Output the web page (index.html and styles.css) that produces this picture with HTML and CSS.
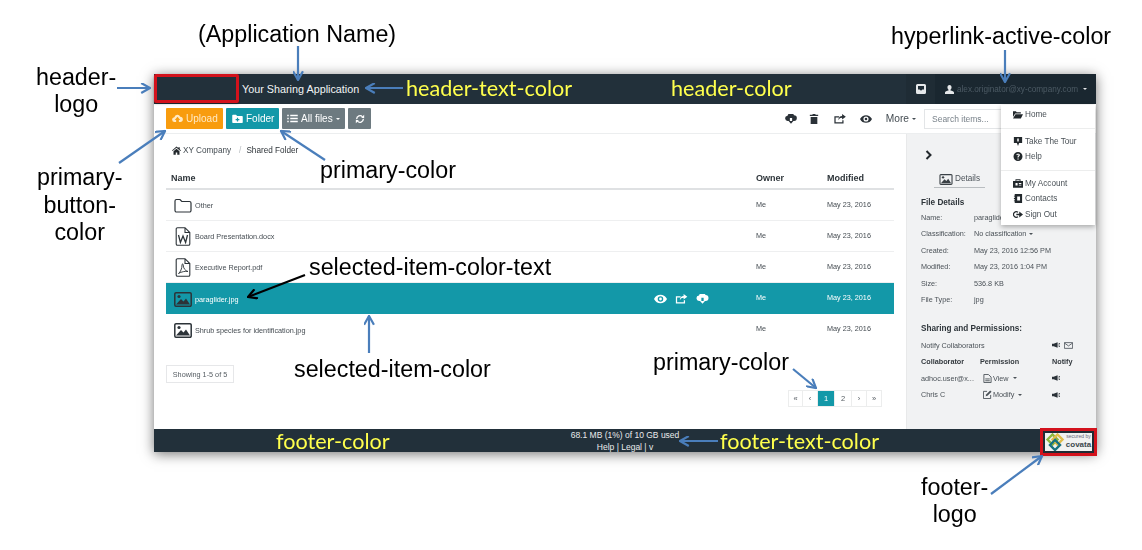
FILE: index.html
```html
<!DOCTYPE html>
<html lang="en">
<head>
<meta charset="utf-8">
<title>Your Sharing Application</title>
<link rel="stylesheet" href="styles.css">
</head>
<body>
<svg class="defs" width="0" height="0" aria-hidden="true">
  <defs>
    <symbol id="i-cloud-up" viewBox="0 0 16 12"><path d="M4 11a3.500 3.500 0 0 1-.6-7A4.600 4.600 0 0 1 12 3.400 3.800 3.800 0 0 1 12 11H10V8h2L8 3.600 4 8h2v3z"/></symbol>
    <symbol id="i-cloud-down" viewBox="0 0 16 13"><path d="M4 9a3.500 3.500 0 0 1-.6-7A4.600 4.600 0 0 1 12 1.400 3.800 3.800 0 0 1 12 9H9.500V5h-3v4zM4.800 9h6.400L8 12.800z"/></symbol>
    <symbol id="i-folder-plus" viewBox="0 0 14 12"><path fill-rule="evenodd" d="M0 2a1 1 0 0 1 1-1h4l1.500 1.500H13a1 1 0 0 1 1 1V11a1 1 0 0 1-1 1H1a1 1 0 0 1-1-1zM6.200 5v1.700H4.500v1.600h1.700V10h1.600V8.300h1.700V6.700H7.800V5z"/></symbol>
    <symbol id="i-list" viewBox="0 0 14 12"><path d="M0 1h2v2H0zM4 1h10v2H4zM0 5h2v2H0zM4 5h10v2H4zM0 9h2v2H0zM4 9h10v2H4z"/></symbol>
    <symbol id="i-refresh" viewBox="0 0 12 12"><path fill="none" stroke="currentColor" stroke-width="1.600" d="M2 6a4 4 0 0 1 7-2.600M10 6a4 4 0 0 1-7 2.600"/><path d="M7.500 4.500L11 1v4zM4.500 7.500L1 11V7z"/></symbol>
    <symbol id="i-trash" viewBox="0 0 10 12"><path d="M3.500 0h3l.5 1h3v1.500H0V1h3zM1 3.500h8V12H1z"/></symbol>
    <symbol id="i-share" viewBox="0 0 14 12"><path fill="none" stroke="currentColor" stroke-width="1.500" d="M10.500 7.500v3.200H1V3.500h5"/><path d="M9.500 0l4.500 3.200-4.500 3.300V4.500C7.500 4.500 6 5.500 5 7.500c0-3 1.800-5 4.500-5z"/></symbol>
    <symbol id="i-eye" viewBox="0 0 14 10"><path fill-rule="evenodd" d="M0 5c1.500-3 4-4.500 7-4.500S12.500 2 14 5c-1.500 3-4 4.500-7 4.500S1.500 8 0 5zm7-3a3 3 0 1 0 0 6 3 3 0 0 0 0-6z"/><circle cx="7" cy="5" r="1.500"/></symbol>
    <symbol id="i-user" viewBox="0 0 10 10"><path d="M5 0c1.500 0 2.300 1 2.300 2.700 0 1.100-.5 2-1.200 2.600v.9c1.800.5 3.900 1 3.900 2.200V10H0V8.400c0-1.200 2.100-1.700 3.900-2.200v-.9C3.200 4.700 2.700 3.800 2.700 2.700 2.700 1 3.500 0 5 0z"/></symbol>
    <symbol id="i-inbox" viewBox="0 0 10 10"><path fill-rule="evenodd" d="M1.500 0h7A1.500 1.500 0 0 1 10 1.500v7A1.500 1.500 0 0 1 8.500 10h-7A1.500 1.500 0 0 1 0 8.500v-7A1.500 1.500 0 0 1 1.500 0zM2 2v3.500h1.700a1.400 1.400 0 0 0 2.600 0H8V2z"/></symbol>
    <symbol id="i-home" viewBox="0 0 12 11"><path d="M6 0l2.500 2.200V1h1.800v2.800L12 5.400l-.8.8L6 1.700.8 6.200 0 5.400zM2 6.500L6 3l4 3.500V11H7V8H5v3H2z"/></symbol>
    <symbol id="i-open" viewBox="0 0 14 11"><path d="M0 1h4l1.200 1.200H11V4H3L0 9zM3.500 5H14l-3 6H0z"/></symbol>
    <symbol id="i-tour" viewBox="0 0 11 12"><path fill-rule="evenodd" d="M0 0h11v8H7l-1.500 4L4 8H0zM4.500 2v4h2V2z"/></symbol>
    <symbol id="i-help" viewBox="0 0 11 11"><path fill-rule="evenodd" d="M5.500 0a5.500 5.500 0 1 1 0 11 5.500 5.500 0 0 1 0-11zM4.800 7.800v1.400h1.500V7.800zM5.600 2C4.300 2 3.500 2.700 3.400 3.800l1.400.2c0-.5.300-.8.800-.8.400 0 .7.300.7.600 0 .8-1.500 1-1.500 2.800h1.400c0-1.100 1.600-1.300 1.600-2.900C7.800 2.700 6.900 2 5.600 2z"/></symbol>
    <symbol id="i-account" viewBox="0 0 12 10"><path fill-rule="evenodd" d="M0 2h3V0h6v2h3v8H0zM4 1v1h4V1zM3 4.500v3h2.500v-3zM7 4.500V5.500h3v-1zM7 6.500v1h3v-1z"/></symbol>
    <symbol id="i-contacts" viewBox="0 0 10 11"><path fill-rule="evenodd" d="M1 0h9v11H1V9H0V8h1V6H0V5h1V3H0V2h1zM4 3v5h3.500V3z"/></symbol>
    <symbol id="i-signout" viewBox="0 0 12 10"><path fill="none" stroke="currentColor" stroke-width="1.500" d="M6 2.200A3.400 3.400 0 1 0 6 7.800"/><path d="M7.500 1.500L12 5 7.500 8.500V6H4V4h3.500z"/></symbol>
    <symbol id="i-folder-line" viewBox="0 0 18 15"><path fill="none" stroke="currentColor" stroke-width="1.200" d="M1 3a1.500 1.500 0 0 1 1.500-1.500h3.500L7.800 3.500h7.700A1.500 1.500 0 0 1 17 5v7.500a1.500 1.500 0 0 1-1.500 1.500h-13A1.500 1.500 0 0 1 1 12.500z"/></symbol>
    <symbol id="i-word" viewBox="0 0 15 19"><path fill="none" stroke="currentColor" stroke-width="1.100" d="M2 .7h7.500L14.300 5.500V17a1.300 1.300 0 0 1-1.300 1.300H2A1.300 1.300 0 0 1 .7 17V2A1.300 1.300 0 0 1 2 .7zM9.500.7v4.800h4.800"/><path fill="none" stroke="currentColor" stroke-width="1.300" d="M3 8l1.900 7.500L7.500 9l2.600 6.500L12 8"/></symbol>
    <symbol id="i-pdf" viewBox="0 0 15 19"><path fill="none" stroke="currentColor" stroke-width="1.100" d="M2 .7h7.500L14.300 5.500V17a1.300 1.300 0 0 1-1.300 1.300H2A1.300 1.300 0 0 1 .7 17V2A1.300 1.300 0 0 1 2 .7zM9.500.7v4.800h4.800"/><path fill="none" stroke="currentColor" stroke-width=".9" d="M3 15.500c2-1.500 3.500-5 3.500-8.500 0-1.500 1.200-1.500 1.200 0 0 3 2 6 4.800 6.500-2.800-.5-6.500.2-9.500 2z"/></symbol>
    <symbol id="i-image" viewBox="0 0 18 15"><path fill="none" stroke="currentColor" stroke-width="1.500" d="M2 .8h14A1.200 1.200 0 0 1 17.200 2v11a1.200 1.200 0 0 1-1.200 1.200H2A1.200 1.200 0 0 1 .8 13V2A1.200 1.200 0 0 1 2 .8z"/><circle cx="5" cy="4.500" r="1.600"/><path d="M2 12.500L7 7l2.500 2.500L12 6.500l4 6z"/></symbol>
    <symbol id="i-megaphone" viewBox="0 0 10 7"><path d="M0 2h2l5-2v7L2 5H0zM8 2l2-1v1.500L8 3zM8 4l2 .5V6L8 5z"/></symbol>
    <symbol id="i-mail" viewBox="0 0 11 8"><path fill="none" stroke="currentColor" d="M.5.500h10v7H.5zM.5 1l5 3.500 5-3.500"/></symbol>
    <symbol id="i-doc" viewBox="0 0 9 10"><path fill="none" stroke="currentColor" d="M.5.500h5l3 3v6h-8zM2 5.500h5M2 7.500h5"/></symbol>
    <symbol id="i-edit" viewBox="0 0 10 10"><path fill="none" stroke="currentColor" d="M8.500 5.500v4h-8v-8h4"/><path d="M3 7l.5-2L8 .5 9.500 2 5 6.500z"/></symbol>
    <symbol id="i-chevron" viewBox="0 0 7 10"><path fill="none" stroke="currentColor" stroke-width="2" d="M1.500 1l4 4-4 4"/></symbol>
  </defs>
</svg>

<div class="canvas">
  <div class="window">
    <header class="app-header">
      <div class="header-logo"></div>
      <div class="app-name">Your Sharing Application</div>
      <div class="inbox-cell"><svg class="ic-10"><use href="#i-inbox"/></svg></div>
      <div class="user-cell"><svg class="ic-user"><use href="#i-user"/></svg><span class="user-mail">alex.originator@xy-company.com</span><span class="caret"></span></div>
    </header>

    <div class="toolbar">
      <button class="btn btn-orange"><svg class="ic-btn"><use href="#i-cloud-up"/></svg>Upload</button>
      <button class="btn btn-teal"><svg class="ic-btn"><use href="#i-folder-plus"/></svg>Folder</button>
      <button class="btn btn-grey"><svg class="ic-btn"><use href="#i-list"/></svg>All files<span class="caret"></span></button>
      <button class="btn btn-grey btn-icon"><svg class="ic-10"><use href="#i-refresh"/></svg></button>
      <div class="tool-actions">
        <svg class="ic-tool"><use href="#i-cloud-down"/></svg>
        <svg class="ic-tool"><use href="#i-trash"/></svg>
        <svg class="ic-tool"><use href="#i-share"/></svg>
        <svg class="ic-tool"><use href="#i-eye"/></svg>
        <span class="more">More<span class="caret"></span></span>
      </div>
      <div class="search">Search items...</div>
    </div>

    <div class="main">
      <section class="files">
        <nav class="crumbs"><svg class="ic-home"><use href="#i-home"/></svg>XY Company<span class="sep">/</span><span class="crumb-now">Shared Folder</span></nav>
        <div class="row row-head"><span>Name</span><span>Owner</span><span>Modified</span></div>
        <div class="row"><span class="file"><svg class="ic-file"><use href="#i-folder-line"/></svg>Other</span><span>Me</span><span>May 23, 2016</span></div>
        <div class="row"><span class="file"><svg class="ic-file"><use href="#i-word"/></svg>Board Presentation.docx</span><span>Me</span><span>May 23, 2016</span></div>
        <div class="row"><span class="file"><svg class="ic-file"><use href="#i-pdf"/></svg>Executive Report.pdf</span><span>Me</span><span>May 23, 2016</span></div>
        <div class="row row-selected">
          <span class="file"><svg class="ic-file"><use href="#i-image"/></svg>paraglider.jpg<span class="row-actions"><svg class="ic-row"><use href="#i-eye"/></svg><svg class="ic-row"><use href="#i-share"/></svg><svg class="ic-row"><use href="#i-cloud-down"/></svg></span></span>
          <span>Me</span><span>May 23, 2016</span>
        </div>
        <div class="row row-last"><span class="file"><svg class="ic-file"><use href="#i-image"/></svg>Shrub species for identification.jpg</span><span>Me</span><span>May 23, 2016</span></div>
        <div class="showing">Showing 1-5 of 5</div>
        <div class="pager"><span>«</span><span>‹</span><span class="page-on">1</span><span>2</span><span>›</span><span>»</span></div>
      </section>

      <aside class="details">
        <svg class="chevron"><use href="#i-chevron"/></svg>
        <div class="tab"><svg class="ic-tab"><use href="#i-image"/></svg>Details</div>
        <h3 class="d-title">File Details</h3>
        <dl class="props">
          <dt>Name:</dt><dd>paraglider.jpg</dd>
          <dt>Classification:</dt><dd>No classification<span class="caret"></span></dd>
          <dt>Created:</dt><dd>May 23, 2016 12:56 PM</dd>
          <dt>Modified:</dt><dd>May 23, 2016 1:04 PM</dd>
          <dt>Size:</dt><dd>536.8 KB</dd>
          <dt>File Type:</dt><dd>jpg</dd>
        </dl>
        <h3 class="d-title d-share">Sharing and Permissions:</h3>
        <div class="perm"><span class="nowrap">Notify Collaborators</span><span></span><span class="notify"><svg class="ic-mega"><use href="#i-megaphone"/></svg><svg class="ic-mail"><use href="#i-mail"/></svg></span></div>
        <div class="perm perm-head"><span>Collaborator</span><span>Permission</span><span>Notify</span></div>
        <div class="perm"><span>adhoc.user@x...</span><span class="level"><svg class="ic-level"><use href="#i-doc"/></svg>View<span class="caret"></span></span><span class="notify"><svg class="ic-mega"><use href="#i-megaphone"/></svg></span></div>
        <div class="perm"><span>Chris C</span><span class="level"><svg class="ic-level"><use href="#i-edit"/></svg>Modify<span class="caret"></span></span><span class="notify"><svg class="ic-mega"><use href="#i-megaphone"/></svg></span></div>
      </aside>
    </div>

    <footer class="app-footer">
      <div>68.1 MB (1%) of 10 GB used</div>
      <div>Help | Legal | v</div>
    </footer>

    <div class="footer-logo">
      <svg class="covata-mark" viewBox="0 0 20 18" aria-hidden="true">
        <path fill="none" stroke="#8cb63c" stroke-width="2.400" d="M5 9l5-5 5 5-5 5z" transform="translate(-2.500 -2.500)"/>
        <path fill="none" stroke="#e0bd4a" stroke-width="2.400" d="M5 9l5-5 5 5-5 5z" transform="translate(2.500 -2.500)"/>
        <path fill="none" stroke="#17727f" stroke-width="2.400" d="M5 9l5-5 5 5-5 5z" transform="translate(0 3)"/>
      </svg>
      <div class="covata-text"><span class="secured">secured by</span><span class="covata">covata</span></div>
    </div>

    <ul class="menu">
      <li><svg class="ic-menu"><use href="#i-open"/></svg>Home</li>
      <li class="menu-div"></li>
      <li><svg class="ic-menu"><use href="#i-tour"/></svg>Take The Tour</li>
      <li><svg class="ic-menu"><use href="#i-help"/></svg>Help</li>
      <li class="menu-div"></li>
      <li><svg class="ic-menu"><use href="#i-account"/></svg>My Account</li>
      <li><svg class="ic-menu"><use href="#i-contacts"/></svg>Contacts</li>
      <li><svg class="ic-menu"><use href="#i-signout"/></svg>Sign Out</li>
    </ul>
  </div>

  <svg class="arrows" viewBox="0 0 1142 550" aria-hidden="true">
    <defs>
      <marker id="head-blue" viewBox="0 0 10 10" refX="9" refY="5" markerWidth="5" markerHeight="5" orient="auto"><path d="M1 .5L9 5 1 9.500" fill="none" stroke="#4a7ebb" stroke-width="2"/></marker>
      <marker id="head-black" viewBox="0 0 10 10" refX="9" refY="5" markerWidth="5" markerHeight="5" orient="auto"><path d="M1 .5L9 5 1 9.500" fill="none" stroke="#000" stroke-width="2"/></marker>
    </defs>
    <g class="arrow-blue">
      <path d="M298 46V80"/>
      <path d="M117 88H150"/>
      <path d="M403 88H366"/>
      <path d="M1005 50V82"/>
      <path d="M119 163L165 131"/>
      <path d="M325 160L281 131"/>
      <path d="M369 353V316"/>
      <path d="M793 369L816 388"/>
      <path d="M718 441H680"/>
      <path d="M991 494L1042 456"/>
    </g>
    <path class="arrow-black" d="M305 275L248 297"/>
  </svg>

  <span class="note n-appname">(Application Name)</span>
  <span class="note n-hyper">hyperlink-active-color</span>
  <span class="note n-hlogo">header-<br>logo</span>
  <span class="note n-pbtn">primary-<br>button-<br>color</span>
  <span class="note n-prim1">primary-color</span>
  <span class="note n-prim2">primary-color</span>
  <span class="note n-seltext">selected-item-color-text</span>
  <span class="note n-sel">selected-item-color</span>
  <span class="note n-flogo">footer-<br>logo</span>
  <span class="tag t-htext">header-text-color</span>
  <span class="tag t-header">header-color</span>
  <span class="tag t-footer">footer-color</span>
  <span class="tag t-ftext">footer-text-color</span>
</div>
</body>
</html>
```

FILE: styles.css
```css
* { box-sizing: border-box; }
html, body { margin: 0; padding: 0; background: #fff; }
body { font-family: "Liberation Sans", Arial, sans-serif; color: #3b4248; overflow: hidden; }
.defs { position: absolute; }
svg { fill: currentColor; flex: none; }

.canvas { position: relative; width: 1142px; height: 550px; padding: 74px 46px 0 154px; }

.window {
  position: relative;
  width: 942px;
  height: 378px;
  display: flex;
  flex-direction: column;
  background: #fff;
  box-shadow: 0 2px 12px rgba(0, 0, 0, .55);
  filter: blur(.35px);
}

/* header */
.app-header { height: 30px; background: #22303a; display: flex; align-items: center; color: #fff; flex: none; }
.header-logo { width: 85px; height: 29px; border: 3px solid #d3121c; border-radius: 2px; background: #22303a; align-self: flex-start; box-shadow: 0 1px 2px rgba(0,0,0,.3); }
.app-name { margin-left: 3px; font-size: 10.800px; flex: 1; color: #f2f4f5; }
.inbox-cell { width: 29px; height: 100%; display: flex; align-items: center; justify-content: center; background: #1f2c35; color: #e6e8ea; }
.user-cell { width: 161px; height: 100%; padding-left: 10px; display: flex; align-items: center; gap: 2px; background: #1a2730; color: #e6e8ea; font-size: 8.200px; }
.user-mail { color: #4c5a64; margin-left: 1px; }
.ic-10 { width: 10px; height: 10px; }
.ic-user { width: 9px; height: 9px; }
.caret { display: inline-block; width: 0; height: 0; margin-left: 3px; border: 2.500px solid transparent; border-top-color: currentColor; border-bottom: 0; vertical-align: middle; }

/* toolbar */
.toolbar { height: 30px; padding: 4px 0 0 12px; display: flex; align-items: flex-start; gap: 3px; border-bottom: 1px solid #eceeef; flex: none; }
.btn { height: 21px; padding: 0 5px; border: 0; border-radius: 1px; font: 10px "Liberation Sans", Arial, sans-serif; color: #fff; white-space: nowrap; display: flex; align-items: center; gap: 3px; }
.btn .caret { margin-left: 0; }
.btn-orange { width: 57px; background: #f89c0e; color: #ffe9c4; padding-left: 6px; }
.btn-teal { width: 53px; background: #1398a8; padding-left: 6px; }
.btn-grey { width: 63px; background: #6d7a80; }
.btn-icon { width: 23px; justify-content: center; padding: 0; }
.ic-btn { width: 11px; height: 9px; }
.tool-actions { margin-left: auto; display: flex; align-items: center; gap: 14px; height: 21px; color: #2b3238; }
.ic-tool { width: 12px; height: 10px; }
.ic-tool:first-child { margin-right: -3px; }
.more { font-size: 10.200px; color: #444c52; }
.search { width: 79px; height: 20px; margin: 1px 93px 0 5px; padding: 4px 7px; font-size: 8.500px; color: #79828a; border: 1px solid #e3e5e7; flex: none; }

/* main */
.main { flex: 1; display: flex; min-height: 0; }
.files { width: 752px; padding: 0 12px; display: flex; flex-direction: column; }
.crumbs { height: 13px; margin-top: 10px; padding-left: 6px; font-size: 8.200px; display: flex; align-items: center; gap: 2px; color: #444c52; }
.ic-home { width: 9px; height: 9px; color: #22282c; }
.sep { margin: 0 3px 0 6px; color: #b5babe; }
.crumb-now { color: #2d3338; }
.row { height: 31px; padding-left: 5px; display: grid; grid-template-columns: 585px 71px 1fr; align-items: center; font-size: 7.250px; color: #454c52; border-bottom: 1px solid #eeeff0; }
.row > span:not(.file) { position: relative; top: -1px; }
.row-head { height: 25px; margin-top: 8px; padding-top: 5px; font-size: 9px; font-weight: 700; color: #2e353a; border-bottom: 2px solid #dfe1e3; }
.row-selected { background: #1398a8; color: #fff; border-bottom: 0; }
.row-last { border-bottom: 0; }
.file { display: flex; align-items: center; padding-top: 1px; font-size: 7.250px; }
.ic-file { width: 18px; height: 19px; margin-right: 3px; margin-left: 3px; color: #2c3338; }
.row-actions { margin-left: auto; margin-right: 47px; display: flex; gap: 8px; align-items: center; }
.ic-row { width: 13px; height: 10px; color: #fff; }

.showing { width: 68px; height: 18px; margin-top: 20px; padding-top: 4px; text-align: center; font-size: 7.250px; color: #555c62; border: 1px solid #e6e7e9; }
.pager { display: flex; margin: 7px 12px 0 0; align-self: flex-end; height: 17px; font-size: 7.500px; color: #555c62; border: 1px solid #eceded; }
.pager span { width: 15px; display: flex; align-items: center; justify-content: center; border-right: 1px solid #eceded; }
.pager span:first-child { width: 14px; }
.pager span:last-child { width: 14px; border-right: 0; }
.pager .page-on, .pager .page-on + span { width: 17px; }
.page-on { background: #1398a8; color: #fff; }

/* details */
.details { width: 190px; padding: 0 0 0 14px; background: #f1f2f3; border-left: 1px solid #e8e9ea; font-size: 7.250px; color: #4a5157; }
.chevron { display: block; width: 7px; height: 10px; margin: 16px 0 0 4px; color: #22282c; }
.tab { width: 51px; height: 17px; margin: 11px 0 0 13px; display: flex; align-items: flex-start; justify-content: center; gap: 2px; font-size: 8.200px; border-bottom: 1px solid #b9bdc0; padding-top: 3px; }
.ic-tab { width: 14px; height: 11px; color: #3a4146; }
.d-title { margin: 0; font-size: 8.200px; line-height: 11px; font-weight: 700; color: #2e353a; }
.tab + .d-title { margin-top: 9px; }
.props { margin: 1px 0 0; display: grid; grid-template-columns: 53px 1fr; grid-auto-rows: 16.500px; align-items: center; }
.props dt, .props dd { margin: 0; }
.d-share { margin-top: 15px; }
.perm { height: 16.500px; display: grid; grid-template-columns: 59px 72px 1fr; align-items: center; }
.nowrap { white-space: nowrap; }
.d-share + .perm { margin-top: 3px; }
.perm-head { font-weight: 700; color: #33393e; }
.level { padding-left: 3px; display: flex; align-items: center; gap: 1px; }
.notify { display: flex; align-items: center; gap: 4px; }
.ic-level { width: 9px; height: 9px; }
.ic-mega { width: 8px; height: 6px; color: #2b3238; }
.ic-mail { width: 9px; height: 7px; }

/* footer */
.app-footer { height: 23px; background: #22303a; color: #e9ebec; font-size: 8.500px; line-height: 12px; text-align: center; flex: none; }

.footer-logo { position: absolute; right: -1px; bottom: -4px; width: 57px; height: 28px; border: 3px solid #d3121c; background: #1f2b33; display: flex; align-items: center; padding: 2px; }
.covata-mark { width: 20px; height: 18px; background: #f1f2f1; }
.covata-text { flex: 1; height: 18px; display: flex; flex-direction: column; align-items: center; background: #f1f2f1; color: #3a474c; }
.secured { font-size: 5px; line-height: 7px; color: #667; }
.covata { font-size: 8px; line-height: 9px; font-weight: 700; }

/* user dropdown */
.menu { position: absolute; left: 847px; top: 31px; width: 94px; height: 120px; margin: 0; padding: 2px 0 0; list-style: none; background: #fff; box-shadow: 0 2px 5px rgba(0,0,0,.3); font-size: 8.200px; color: #4a5157; }
.menu li { height: 15.500px; padding-left: 12px; display: flex; align-items: center; gap: 2px; }
.menu .menu-div { height: 1px; padding: 0; margin: 5px 0; background: #eceded; }
.ic-menu { width: 10px; height: 9px; color: #22282c; }

/* annotations */
.arrows { position: absolute; inset: 0; width: 1142px; height: 550px; pointer-events: none; }
.arrow-blue path { fill: none; stroke: #4a7ebb; stroke-width: 2.200; marker-end: url(#head-blue); }
.arrow-black { fill: none; stroke: #000; stroke-width: 2.200; marker-end: url(#head-black); }

.note { position: absolute; font-size: 23.300px; line-height: 27px; color: #000; text-align: center; white-space: nowrap; }
.tag { position: absolute; font-family: Lato, "Liberation Sans", sans-serif; font-size: 21.600px; line-height: 24px; color: #ffff4d; white-space: nowrap; }
.n-appname { left: 198px; top: 21px; }
.n-hyper { left: 891px; top: 23px; }
.n-hlogo { left: 36px; top: 64px; }
.n-pbtn { left: 37px; top: 164px; line-height: 27.500px; }
.n-prim1 { left: 320px; top: 157px; }
.n-prim2 { left: 653px; top: 349px; }
.n-seltext { left: 309px; top: 254px; }
.n-sel { left: 294px; top: 356px; }
.n-flogo { left: 921px; top: 474px; }
.t-htext { left: 406px; top: 76px; }
.t-header { left: 671px; top: 76px; }
.t-footer { left: 276px; top: 429px; }
.t-ftext { left: 720px; top: 429px; }
```
